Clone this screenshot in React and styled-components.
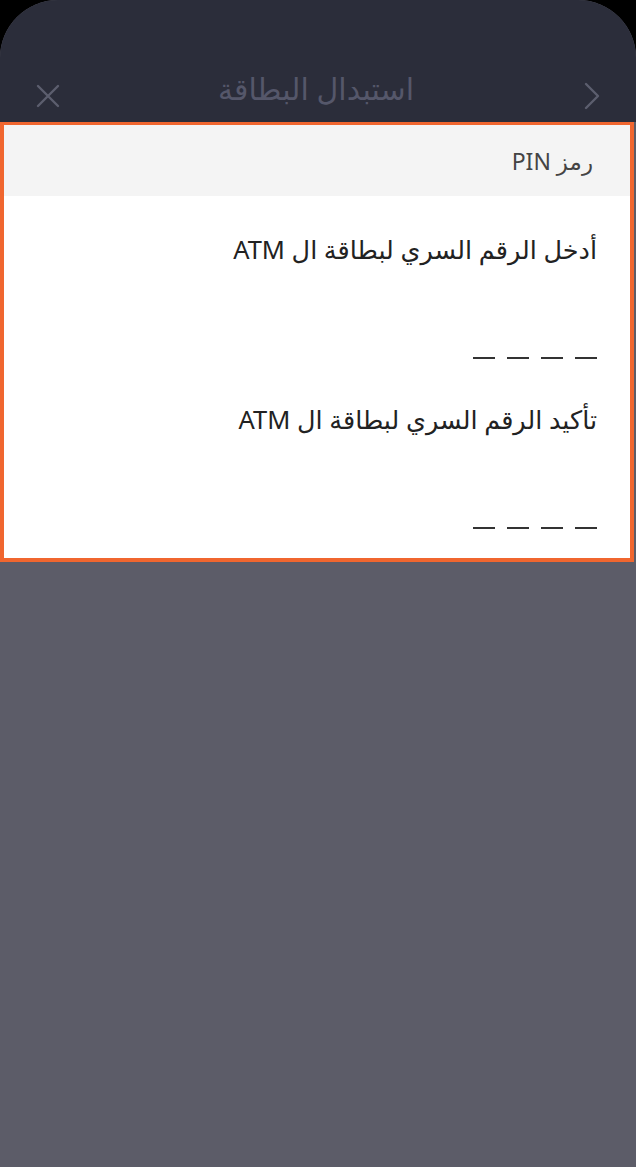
import React from "react";
import styled, { createGlobalStyle } from "styled-components";

const Global = createGlobalStyle`
  html, body { margin: 0; padding: 0; background: #000; }
  body { font-family: "Noto Sans", "DejaVu Sans", sans-serif; }
  * { box-sizing: border-box; }
`;

const Screen = styled.div`
  width: 636px;
  height: 1167px;
  background: #000;
  display: flex;
  flex-direction: column;
`;

const Panel = styled.div`
  flex: 1;
  display: flex;
  flex-direction: column;
  background: #5c5c68;
  border-radius: 58px 58px 0 0;
  overflow: hidden;
`;

const Header = styled.header`
  height: 122px;
  background: #2b2d3a;
  padding: 74px 22px 0 26px;
`;

const HeaderRow = styled.div`
  height: 44px;
  display: flex;
  align-items: center;
  justify-content: space-between;
  direction: ltr;
`;

const Title = styled.h1`
  margin: 0;
  font-weight: 400;
  font-size: 30px;
  color: #55576a;
  direction: rtl;
  transform: translate(-4px, -8px);
`;

const IconButton = styled.button`
  width: 44px;
  height: 44px;
  padding: 0;
  border: 0;
  background: transparent;
  display: flex;
  align-items: center;
  justify-content: center;
  color: #5c5e6e;
`;

const Card = styled.section`
  margin-right: 2px;
  border: 4px solid #f0662f;
  border-top-width: 3px;
  background: #fff;
  direction: rtl;
`;

const SectionHead = styled.div`
  height: 71px;
  background: #f4f4f4;
  display: flex;
  align-items: center;
  padding-right: 37px;
  font-size: 23px;
  color: #444;
`;

const Body = styled.div`
  padding: 34px 33px 29px;
  display: flex;
  flex-direction: column;
`;

const Field = styled.div`
  display: flex;
  flex-direction: column;
  & + & {
    margin-top: 41px;
  }
`;

const Label = styled.label`
  font-size: 25.5px;
  line-height: 38px;
  color: #222;
`;

const Dashes = styled.div`
  margin-top: 89px;
  display: flex;
  gap: 12px;
`;

const Dash = styled.span`
  width: 22px;
  height: 2px;
  background: #333;
`;

const PinField = ({ label }) => (
  <Field>
    <Label>{label}</Label>
    <Dashes>
      {[0, 1, 2, 3].map((i) => (
        <Dash key={i} />
      ))}
    </Dashes>
  </Field>
);

export default function App() {
  return (
    <Screen>
      <Global />
      <Panel>
        <Header>
          <HeaderRow>
            <IconButton aria-label="close">
              <svg width="24" height="24" viewBox="0 0 24 24" fill="none" stroke="currentColor" strokeWidth="2.4" strokeLinecap="round">
                <path d="M2 2 L22 22 M22 2 L2 22" />
              </svg>
            </IconButton>
            <Title>استبدال البطاقة</Title>
            <IconButton aria-label="next">
              <svg width="18" height="28" viewBox="0 0 18 28" fill="none" stroke="currentColor" strokeWidth="2.4" strokeLinecap="round" strokeLinejoin="round">
                <path d="M3 2 L15 14 L3 26" />
              </svg>
            </IconButton>
          </HeaderRow>
        </Header>
        <Card>
          <SectionHead>رمز PIN</SectionHead>
          <Body>
            <PinField label="أدخل الرقم السري لبطاقة ال ATM" />
            <PinField label="تأكيد الرقم السري لبطاقة ال ATM" />
          </Body>
        </Card>
      </Panel>
    </Screen>
  );
}
